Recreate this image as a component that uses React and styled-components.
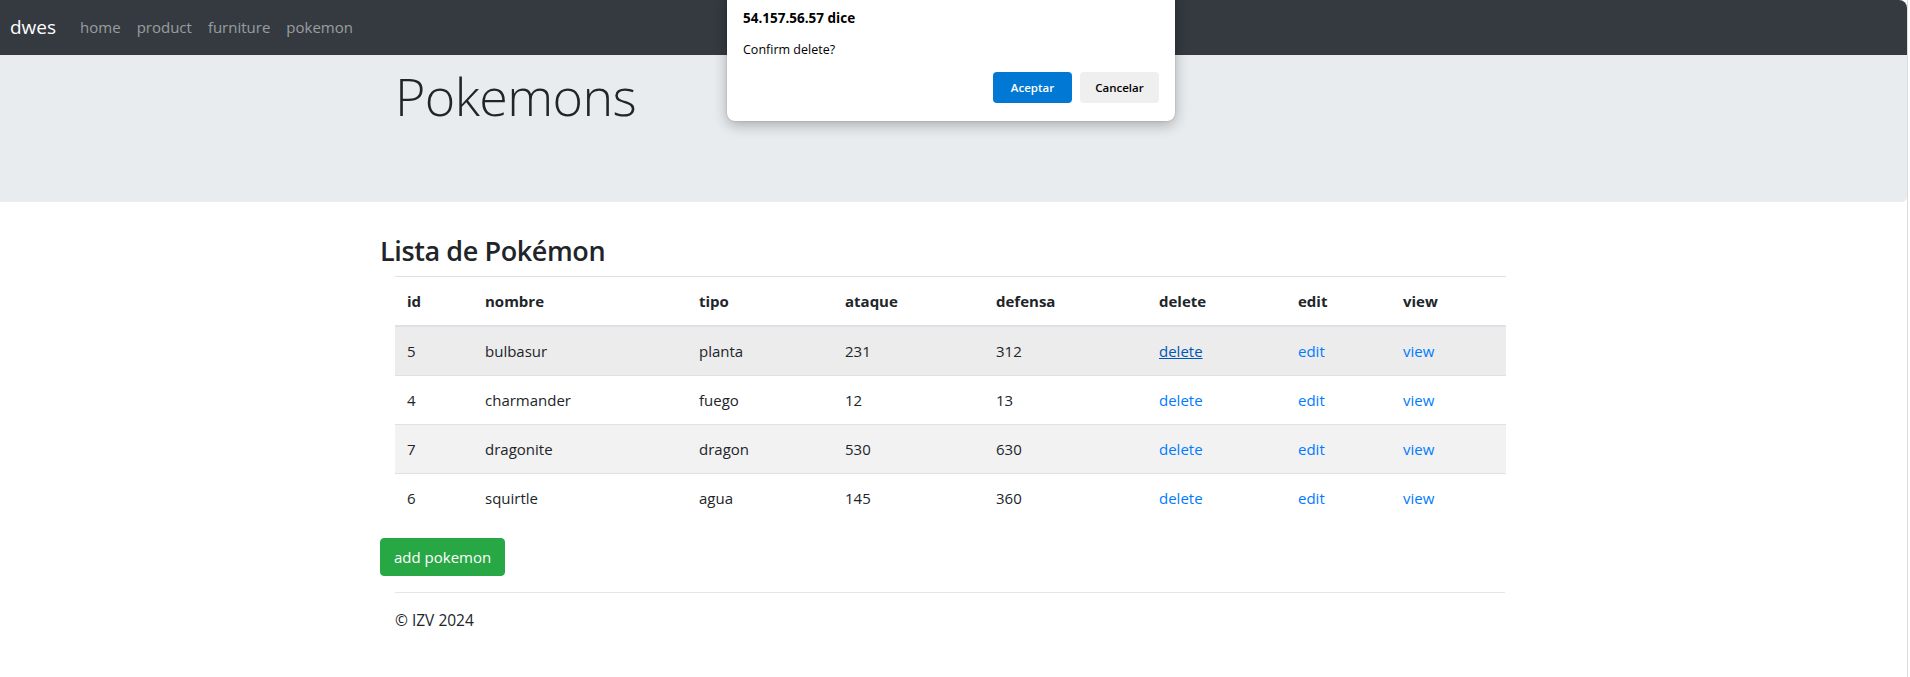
import React from 'react';
import styled, { createGlobalStyle } from 'styled-components';

const GlobalStyle = createGlobalStyle`
  html, body {
    margin: 0;
    padding: 0;
    background: #ffffff;
  }
  body {
    font-family: 'Open Sans', 'Noto Sans', sans-serif;
    font-size: 16px;
    line-height: 1.5;
    color: #212529;
  }
`;

const Page = styled.div`
  width: 1907px;
  border-right: 1px solid #dcdcdc;
  min-height: 677px;
  overflow: hidden;
  position: relative;
`;

const Navbar = styled.nav`
  display: flex;
  align-items: center;
  height: 55px;
  padding: 0 10px;
  background-color: #343a40;
  border-top-right-radius: 8px;
`;

const Brand = styled.a`
  font-size: 19px;
  color: #ffffff;
  margin-right: 16px;
  text-decoration: none;
`;

const NavLink = styled.a`
  padding: 0 8px;
  font-size: 15px;
  color: rgba(255, 255, 255, 0.5);
  text-decoration: none;
`;

const Jumbotron = styled.header`
  height: 147px;
  box-sizing: border-box;
  padding-top: 10px;
  padding-right: 7px;
  background-color: #e9ecef;
  border-bottom-right-radius: 5px;
`;

const Container = styled.div`
  width: 1140px;
  margin: 0 auto;
  padding: 0 ${props => (props.padded ? '15px' : '0')};
  box-sizing: border-box;
`;

const Main = styled.main`
  padding-right: 7px;
  padding-top: 33px;
`;

const Display = styled.h1`
  margin: 0;
  font-size: 52px;
  font-weight: 300;
  line-height: 1.2;
  letter-spacing: -0.6px;
`;

const Title = styled.h2`
  margin: 0 0 9px;
  font-size: 27px;
  font-weight: 600;
  line-height: 1.2;
  letter-spacing: -0.4px;
`;

const Table = styled.table`
  width: 1111px;
  margin: 0 15px 16px;
  border-collapse: collapse;
  table-layout: fixed;
  font-size: 15px;
`;

const Th = styled.th`
  padding: 12px;
  text-align: left;
  font-weight: 700;
  border-top: 1px solid #dee2e6;
  border-bottom: 2px solid #dee2e6;
  line-height: 24px;
`;

const Row = styled.tr`
  background-color: ${props =>
    props.hover ? 'rgba(0, 0, 0, 0.075)' : props.striped ? 'rgba(0, 0, 0, 0.05)' : 'transparent'};
`;

const Td = styled.td`
  padding: 12px;
  border-top: 1px solid #dee2e6;
  line-height: 24px;
`;

const FirstTd = styled(Td)`
  border-top: none;
`;

const Link = styled.a`
  text-decoration: ${props => (props.hover ? 'underline' : 'none')};
  color: ${props => (props.hover ? '#0056b3' : '#007bff')};
`;

const AddButton = styled.button`
  display: block;
  height: 38px;
  padding: 0 13px;
  font-family: inherit;
  font-size: 15px;
  color: #ffffff;
  background-color: #28a745;
  border: 1px solid #28a745;
  border-radius: 4px;
`;

const Footer = styled.footer`
  margin: 16px 15px 0;
  padding-top: 16px;
  border-top: 1px solid rgba(0, 0, 0, 0.1);
  font-size: 15.5px;
`;

const Dialog = styled.div`
  position: absolute;
  left: 727px;
  top: -10px;
  width: 448px;
  height: 131px;
  box-sizing: border-box;
  padding: 18px 16px 0;
  background: #ffffff;
  border-radius: 8px;
  box-shadow: 0 4px 14px rgba(0, 0, 0, 0.28), 0 0 2px rgba(0, 0, 0, 0.2);
  font-family: 'Open Sans', 'Noto Sans', sans-serif;
  color: #000000;
`;

const DialogTitle = styled.div`
  font-size: 13.5px;
  font-weight: 700;
  line-height: 20px;
`;

const DialogText = styled.div`
  margin-top: 12px;
  font-size: 12.5px;
  line-height: 20px;
`;

const DialogActions = styled.div`
  display: flex;
  justify-content: flex-end;
  gap: 8px;
  margin-top: 12px;
`;

const DialogButton = styled.button`
  width: 79px;
  height: 31px;
  border: none;
  border-radius: 4px;
  font-family: inherit;
  font-size: 11.5px;
  font-weight: 600;
  color: ${props => (props.primary ? '#ffffff' : '#000000')};
  background-color: ${props => (props.primary ? '#0078d4' : '#efefef')};
`;

const columns = [
  { key: 'id', width: 78 },
  { key: 'nombre', width: 214 },
  { key: 'tipo', width: 146 },
  { key: 'ataque', width: 151 },
  { key: 'defensa', width: 163 },
  { key: 'delete', width: 139 },
  { key: 'edit', width: 105 },
  { key: 'view', width: 115 },
];

const pokemons = [
  { id: 5, nombre: 'bulbasur', tipo: 'planta', ataque: 231, defensa: 312 },
  { id: 4, nombre: 'charmander', tipo: 'fuego', ataque: 12, defensa: 13 },
  { id: 7, nombre: 'dragonite', tipo: 'dragon', ataque: 530, defensa: 630 },
  { id: 6, nombre: 'squirtle', tipo: 'agua', ataque: 145, defensa: 360 },
];

const App = () => {
  return (
    <Page>
      <GlobalStyle />
      <Navbar>
        <Brand href="#">dwes</Brand>
        <NavLink href="#">home</NavLink>
        <NavLink href="#">product</NavLink>
        <NavLink href="#">furniture</NavLink>
        <NavLink href="#">pokemon</NavLink>
      </Navbar>
      <Jumbotron>
        <Container padded>
          <Display>Pokemons</Display>
        </Container>
      </Jumbotron>
      <Main>
        <Container>
          <Title>Lista de Pokémon</Title>
          <Table>
            <colgroup>
              {columns.map(col => (
                <col key={col.key} style={{ width: col.width }} />
              ))}
            </colgroup>
            <thead>
              <tr>
                {columns.map(col => (
                  <Th key={col.key}>{col.key}</Th>
                ))}
              </tr>
            </thead>
            <tbody>
              {pokemons.map((p, index) => {
                const Cell = index === 0 ? FirstTd : Td;
                return (
                  <Row key={p.id} hover={index === 0} striped={index === 2}>
                    <Cell>{p.id}</Cell>
                    <Cell>{p.nombre}</Cell>
                    <Cell>{p.tipo}</Cell>
                    <Cell>{p.ataque}</Cell>
                    <Cell>{p.defensa}</Cell>
                    <Cell><Link href="#" hover={index === 0}>delete</Link></Cell>
                    <Cell><Link href="#">edit</Link></Cell>
                    <Cell><Link href="#">view</Link></Cell>
                  </Row>
                );
              })}
            </tbody>
          </Table>
          <AddButton>add pokemon</AddButton>
          <Footer>© IZV 2024</Footer>
        </Container>
      </Main>
      <Dialog>
        <DialogTitle>54.157.56.57 dice</DialogTitle>
        <DialogText>Confirm delete?</DialogText>
        <DialogActions>
          <DialogButton primary>Aceptar</DialogButton>
          <DialogButton>Cancelar</DialogButton>
        </DialogActions>
      </Dialog>
    </Page>
  );
};

export default App;
